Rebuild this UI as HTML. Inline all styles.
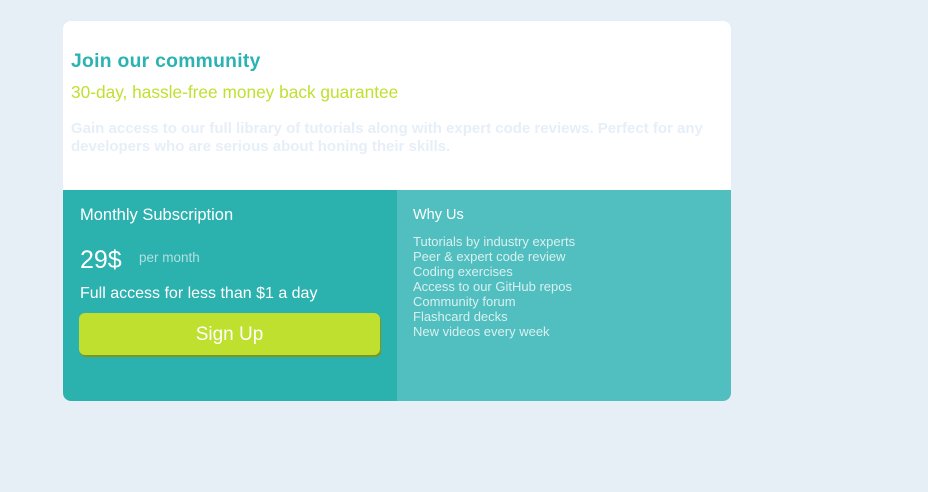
<!DOCTYPE html>
<html><head><style>
*{margin:0;padding:0;box-sizing:border-box}
body{width:928px;height:492px;background:#e6eef6;font-family:"Liberation Sans",sans-serif;position:relative;overflow:hidden}
.card{position:absolute;left:63px;top:21px;width:668px;height:380px;background:#fff;border-radius:8px;overflow:hidden}
.top{position:absolute;left:8px;top:0;width:650px}
h1{position:absolute;top:30px;font-size:19.3px;font-weight:bold;color:#2bb3b1;white-space:nowrap;letter-spacing:.3px}
.g{position:absolute;top:61px;font-size:17.3px;color:#bfe02f;white-space:nowrap}
.p{position:absolute;top:99px;font-size:15px;line-height:18px;color:#e6eff8;font-weight:bold;width:650px}
.l{position:absolute;left:0;top:169px;width:334px;height:211px;background:#2bb1ae;color:#fff}
.r{position:absolute;left:334px;top:169px;width:334px;height:211px;background:#51bebf;color:#fff}
.ms{position:absolute;left:17px;top:16px;font-size:16.5px;white-space:nowrap}
.pr{position:absolute;left:17px;top:56px;font-size:25px}
.pm{position:absolute;left:76px;top:60px;font-size:13.5px;color:#b4dfe0}
.fa{position:absolute;left:17px;top:95px;font-size:16px;white-space:nowrap}
.btn{position:absolute;left:16px;top:123px;width:301px;height:42px;background:#bfe02f;border-radius:6px;box-shadow:1px 2px 0 #7e961a;font-size:19px;text-align:center;line-height:43px;color:#fff}
.wy{position:absolute;left:16px;top:17px;font-size:14.5px}
.li{position:absolute;left:16px;top:44px;font-size:13px;line-height:15px;color:#d9f0f0;white-space:nowrap}
</style></head><body>
<div class="card">
<div class="top">
<h1>Join our community</h1>
<div class="g">30-day, hassle-free money back guarantee</div>
<div class="p">Gain access to our full library of tutorials along with expert code reviews. Perfect for any developers who are serious about honing their skills.</div>
</div>
<div class="l">
<div class="ms">Monthly Subscription</div>
<div class="pr">29$</div>
<div class="pm">per month</div>
<div class="fa">Full access for less than $1 a day</div>
<div class="btn">Sign Up</div>
</div>
<div class="r">
<div class="wy">Why Us</div>
<div class="li">Tutorials by industry experts<br>Peer &amp; expert code review<br>Coding exercises<br>Access to our GitHub repos<br>Community forum<br>Flashcard decks<br>New videos every week</div>
</div>
</div>
</body></html>
